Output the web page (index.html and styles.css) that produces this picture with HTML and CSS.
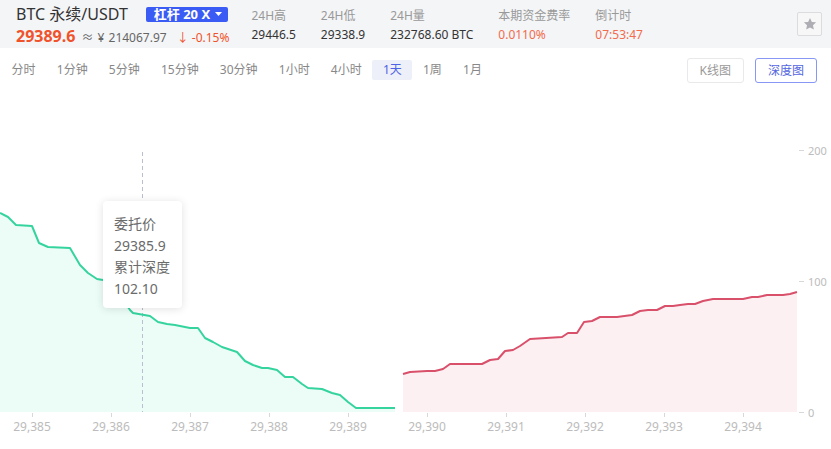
FILE: index.html
```html
<!DOCTYPE html>
<html lang="zh-CN">
<head>
<meta charset="utf-8">
<title>BTC 永续/USDT 深度图</title>
<link rel="stylesheet" href="styles.css">
</head>
<body>
<header class="top">
  <div class="pair">
    <div class="pair-row">
      <span class="pair-name">BTC 永续/USDT</span>
      <span class="lev">杠杆 20 X<svg class="caret" width="7" height="4" viewBox="0 0 7 4"><path d="M0 0h7L3.5 4z" fill="#fff"/></svg></span>
    </div>
    <div class="price-row">
      <span class="price">29389.6</span>
      <span class="cny">≈ ¥ 214067.97</span>
      <span class="chg">↓ -0.15%</span>
    </div>
  </div>
  <div class="stat"><div class="stat-label">24H高</div><div class="stat-val">29446.5</div></div>
  <div class="stat"><div class="stat-label">24H低</div><div class="stat-val">29338.9</div></div>
  <div class="stat"><div class="stat-label">24H量</div><div class="stat-val">232768.60 BTC</div></div>
  <div class="stat"><div class="stat-label">本期资金费率</div><div class="stat-val hot">0.0110%</div></div>
  <div class="stat"><div class="stat-label">倒计时</div><div class="stat-val hot">07:53:47</div></div>
  <button class="fav" aria-label="收藏"><svg width="14" height="14" viewBox="0 0 24 24"><path d="M12 1.5l3.2 6.9 7.3.8-5.4 5 1.5 7.4L12 17.9l-6.6 3.7 1.5-7.4-5.4-5 7.3-.8z" fill="#adadb3"/></svg></button>
</header>

<nav class="tabs">
  <span class="tab">分时</span>
  <span class="tab">1分钟</span>
  <span class="tab">5分钟</span>
  <span class="tab">15分钟</span>
  <span class="tab">30分钟</span>
  <span class="tab">1小时</span>
  <span class="tab">4小时</span>
  <span class="tab active">1天</span>
  <span class="tab">1周</span>
  <span class="tab">1月</span>
  <div class="views">
    <span class="view">K线图</span>
    <span class="view on">深度图</span>
  </div>
</nav>

<section class="chart">
  <svg class="depth" width="831" height="357" viewBox="0 92 831 357">
    <polygon class="bid-fill" points="0,213 8,217 16,225 32,226 39,243 48,247 70,248 80,265 88,273 97,279 103,280 112,286 122,298 130,310 133,313 150,316 158,322 167,324 175,325 190,328 198,328 205,338 213,342 222,347 237,352 245,361 253,365 262,368 268,368 277,370 285,377 293,377 302,384 308,388 322,389 332,393 340,395 348,402 356,408 395,408 395,412 0,412"/>
    <polygon class="ask-fill" points="403,374 410,372 427,371 435,371 443,369 450,364 482,364 490,360 498,359 505,351 513,350 520,346 530,339 562,337 568,333 577,333 584,322 592,321 600,317 617,317 632,315 640,311 648,310 657,310 665,306 673,306 680,305 688,304 695,304 703,301 713,299 720,299 743,299 752,297 758,297 767,295 783,295 790,294 797,292 797,412 403,412"/>
    <line class="cross" x1="142.5" y1="152" x2="142.5" y2="412"/>
    <polyline class="bid-line" points="0,213 8,217 16,225 32,226 39,243 48,247 70,248 80,265 88,273 97,279 103,280 112,286 122,298 130,310 133,313 150,316 158,322 167,324 175,325 190,328 198,328 205,338 213,342 222,347 237,352 245,361 253,365 262,368 268,368 277,370 285,377 293,377 302,384 308,388 322,389 332,393 340,395 348,402 356,408 395,408"/>
    <polyline class="ask-line" points="403,374 410,372 427,371 435,371 443,369 450,364 482,364 490,360 498,359 505,351 513,350 520,346 530,339 562,337 568,333 577,333 584,322 592,321 600,317 617,317 632,315 640,311 648,310 657,310 665,306 673,306 680,305 688,304 695,304 703,301 713,299 720,299 743,299 752,297 758,297 767,295 783,295 790,294 797,292"/>
    <g class="ticks">
      <line x1="32.5" y1="413" x2="32.5" y2="417"/>
      <line x1="111.5" y1="413" x2="111.5" y2="417"/>
      <line x1="190.5" y1="413" x2="190.5" y2="417"/>
      <line x1="269.5" y1="413" x2="269.5" y2="417"/>
      <line x1="348.5" y1="413" x2="348.5" y2="417"/>
      <line x1="427.5" y1="413" x2="427.5" y2="417"/>
      <line x1="506.5" y1="413" x2="506.5" y2="417"/>
      <line x1="585.5" y1="413" x2="585.5" y2="417"/>
      <line x1="664.5" y1="413" x2="664.5" y2="417"/>
      <line x1="743.5" y1="413" x2="743.5" y2="417"/>
      <line x1="799" y1="150.5" x2="804" y2="150.5"/>
      <line x1="799" y1="281.5" x2="804" y2="281.5"/>
      <line x1="799" y1="412.5" x2="804" y2="412.5"/>
    </g>
    <g class="xlab">
      <text x="32" y="431">29,385</text>
      <text x="111" y="431">29,386</text>
      <text x="190" y="431">29,387</text>
      <text x="269" y="431">29,388</text>
      <text x="348" y="431">29,389</text>
      <text x="427" y="431">29,390</text>
      <text x="506" y="431">29,391</text>
      <text x="585" y="431">29,392</text>
      <text x="664" y="431">29,393</text>
      <text x="743" y="431">29,394</text>
    </g>
    <g class="ylab">
      <text x="808" y="154.5">200</text>
      <text x="808" y="285.5">100</text>
      <text x="808" y="416.5">0</text>
    </g>
  </svg>
  <div class="tip">
    <div>委托价</div>
    <div>29385.9</div>
    <div>累计深度</div>
    <div>102.10</div>
  </div>
</section>
</body>
</html>
```
FILE: styles.css
```css
html, body {
  margin: 0;
  padding: 0;
  background: #fff;
}
body {
  width: 831px;
  height: 449px;
  overflow: hidden;
  font-family: "Noto Sans", "Noto Sans CJK SC", sans-serif;
  color: #333;
}

/* header */
.top {
  display: flex;
  align-items: flex-start;
  gap: 25px;
  height: 48px;
  box-sizing: border-box;
  padding: 3px 0 0 16px;
  background: #f4f5f7;
}
.pair {
  margin-right: -3px;
}
.pair-row {
  display: flex;
  align-items: center;
  height: 22px;
}
.pair-name {
  font-size: 16px;
  line-height: 22px;
  color: #333;
}
.lev {
  display: inline-flex;
  align-items: center;
  margin-left: 18px;
  height: 15px;
  padding: 0 6px 0 8px;
  background: #3b5bf5;
  border-radius: 2px;
  color: #fff;
  font-size: 13px;
  font-weight: 700;
  line-height: 15px;
}
.caret {
  margin-left: 5px;
}
.price-row {
  display: flex;
  align-items: baseline;
  height: 22px;
  line-height: 22px;
}
.price {
  font-size: 16px;
  font-weight: 700;
  color: #f0522b;
}
.cny {
  margin-left: 6px;
  font-size: 12px;
  color: #666;
  word-spacing: 1px;
}
.chg {
  margin-left: 10px;
  font-size: 12px;
  color: #f0522b;
}
.stat {
  padding-top: 3px;
  font-size: 12px;
  line-height: 19px;
}
.stat-label {
  color: #999;
}
.stat-val {
  color: #333;
}
.stat-val.hot {
  color: #f26b4c;
}
.fav {
  margin: 9px 9px 0 auto;
  width: 25px;
  height: 24px;
  padding: 0;
  display: flex;
  align-items: center;
  justify-content: center;
  background: #f7f7f8;
  border: 1px solid #dcdcdf;
  border-radius: 2px;
}

/* tabs */
.tabs {
  display: flex;
  align-items: center;
  height: 44px;
  padding-left: 1px;
  font-size: 12px;
}
.tab {
  padding: 0 10.6px;
  line-height: 20px;
  color: #888;
  border-radius: 2px;
}
.tab.active {
  background: #eef0f9;
  color: #4f63e6;
}
.views {
  display: flex;
  gap: 11px;
  margin-left: auto;
  margin-right: 14px;
}
.view {
  box-sizing: border-box;
  height: 25px;
  line-height: 23px;
  padding: 0 12px;
  border: 1px solid #e9e9eb;
  border-radius: 3px;
  color: #999;
}
.view.on {
  border-color: #8797f3;
  color: #5366e0;
}

/* chart */
.chart {
  position: relative;
  height: 357px;
}
.depth {
  display: block;
}
.bid-fill { fill: #ecfcf6; }
.ask-fill { fill: #fcf0f3; }
.bid-line {
  fill: none;
  stroke: #35d49f;
  stroke-width: 2;
  stroke-linejoin: round;
}
.ask-line {
  fill: none;
  stroke: #d9506b;
  stroke-width: 2;
  stroke-linejoin: round;
}
.cross {
  stroke: #b9bfce;
  stroke-width: 1;
  stroke-dasharray: 4 3;
}
.ticks line {
  stroke: #d8d8d8;
  stroke-width: 1;
}
.xlab text {
  font-family: "Noto Sans", sans-serif;
  font-size: 12px;
  fill: #bcbcbc;
  text-anchor: middle;
}
.ylab text {
  font-family: "Noto Sans", sans-serif;
  font-size: 11px;
  fill: #bcbcbc;
}
.tip {
  position: absolute;
  left: 103px;
  top: 109px;
  width: 79px;
  height: 107px;
  box-sizing: border-box;
  padding: 12px 0 0 11px;
  background: #fff;
  border-radius: 4px;
  box-shadow: 0 1px 8px rgba(0, 0, 0, 0.12);
  font-size: 14px;
  line-height: 21.5px;
  color: #6b6b6b;
  white-space: nowrap;
}
```
